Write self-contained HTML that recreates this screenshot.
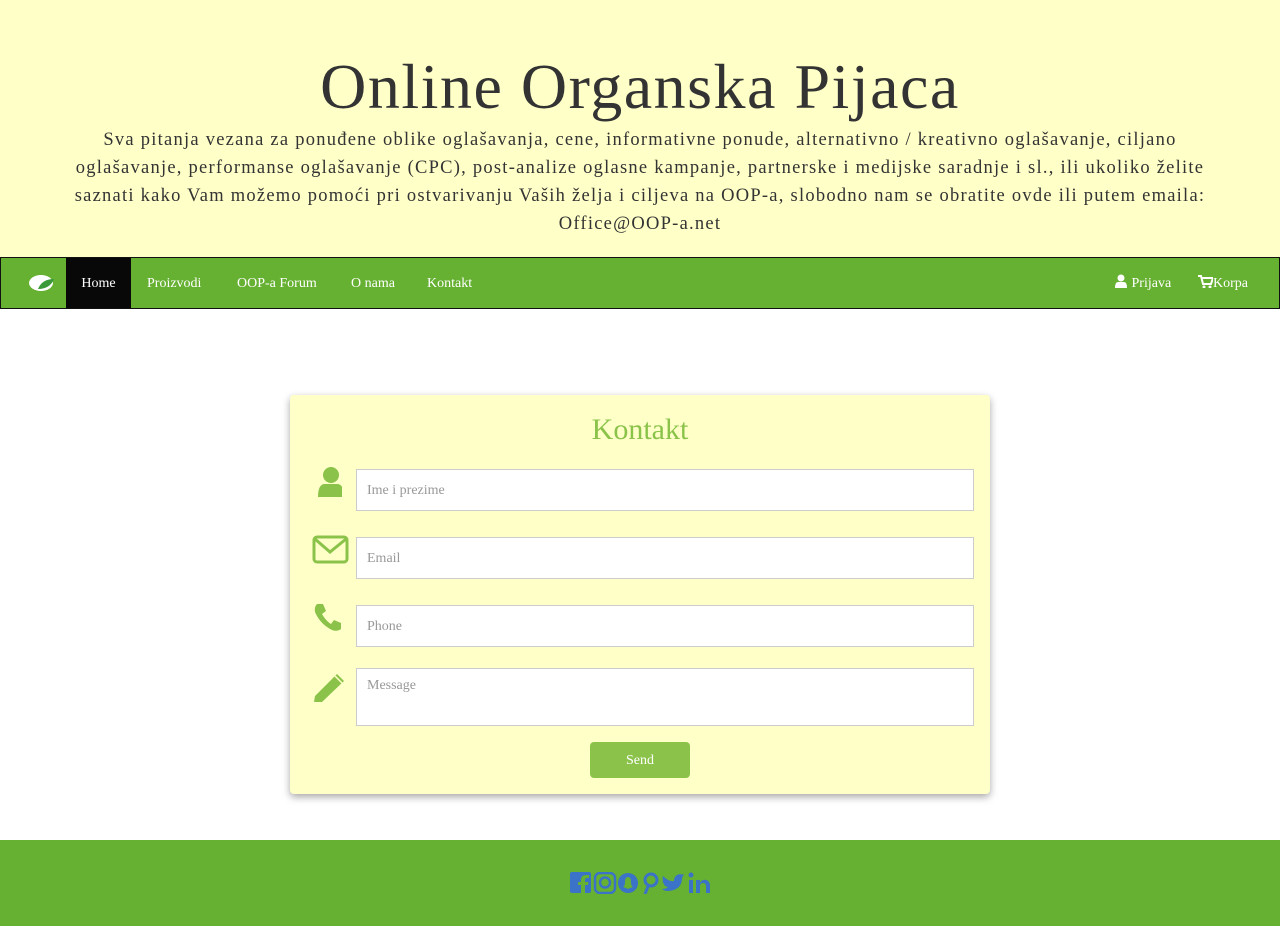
<!DOCTYPE html>
<html><head><meta charset="utf-8"><style>
body{margin:0;font-family:"Liberation Serif",serif;background:#fff;width:1280px;height:926px;overflow:hidden;position:relative}
.hdr{background:#ffffc8;height:257px;text-align:center;color:#333}
.hdr h1{margin:0;padding-top:52px;font-weight:normal;font-size:64px;letter-spacing:1.5px;line-height:70px}
.hdr p{margin:4px 0 0;font-size:18.5px;line-height:28px;white-space:nowrap;letter-spacing:1.25px}
.nav{position:absolute;top:257px;left:0;width:1278px;height:50px;background:#66b032;border:1px solid #111;color:#fff;font-size:14px}
.nav a{position:absolute;top:0;height:50px;line-height:52px;color:#fff}
.card{position:absolute;left:290px;top:395px;width:700px;height:399px;background:#ffffc8;border-radius:4px;box-shadow:0 3px 8px rgba(0,0,0,.35)}
.card h2{margin:0;text-align:center;color:#8bc34a;font-weight:normal;font-size:30px;padding-top:18px}
.in{position:absolute;left:66px;width:618px;height:42px;border:1px solid #ccc;background:#fff;box-sizing:border-box;color:#999;font-size:14px;padding:13px 10px}
.ic{position:absolute;left:22px}
.btn{position:absolute;left:300px;top:347px;width:100px;height:36px;background:#8bc34a;border-radius:4px;color:#fff;text-align:center;line-height:38px;font-size:14px}
.ft{position:absolute;top:840px;left:0;width:1280px;height:86px;background:#66b032}
</style></head><body>
<div class="hdr"><h1>Online Organska Pijaca</h1>
<p>Sva pitanja vezana za ponuđene oblike oglašavanja, cene, informativne ponude, alternativno / kreativno oglašavanje, ciljano<br>oglašavanje, performanse oglašavanje (CPC), post-analize oglasne kampanje, partnerske i medijske saradnje i sl., ili ukoliko želite<br>saznati kako Vam možemo pomoći pri ostvarivanju Vaših želja i ciljeva na OOP-a, slobodno nam se obratite ovde ili putem emaila:<br>Office@OOP-a.net</p></div>
<div class="nav">
<svg style="position:absolute;left:27px;top:15px" width="28" height="20"><ellipse cx="13" cy="10" rx="12" ry="8" fill="#fff"/><path d="M10 16 Q14 6 26 6 Q22 16 10 16Z" fill="#3a9a3a"/></svg>
<a style="left:65px;width:65px;background:#080808;text-align:center">Home</a>
<a style="left:146px">Proizvodi</a><a style="left:236px">OOP-a Forum</a><a style="left:350px">O nama</a><a style="left:426px">Kontakt</a>
<a style="left:1113px"><svg width="14" height="14" style="vertical-align:-1px"><circle cx="7" cy="4" r="3.5" fill="#fff"/><path d="M1 14 Q1 8 4 8 L10 8 Q13 8 13 14Z" fill="#fff"/></svg> Prijava</a>
<a style="left:1197px"><svg width="15" height="13" style="vertical-align:-1px"><path d="M0 1h3l2 8h8l2-6H4" fill="none" stroke="#fff" stroke-width="2"/><circle cx="6" cy="12" r="1.5" fill="#fff"/><circle cx="12" cy="12" r="1.5" fill="#fff"/></svg>Korpa</a>
</div>
<div class="card"><h2>Kontakt</h2>
<svg class="ic" style="top:70px" width="30" height="34"><circle cx="19" cy="10" r="8" fill="#8bc34a"/><path d="M6 32 Q6 20 12 19 L26 19 Q32 20 32 32Z" fill="#8bc34a"/></svg>
<div class="in" style="top:74px">Ime i prezime</div>
<svg class="ic" style="top:140px" width="38" height="30"><rect x="2" y="2" width="33" height="25" rx="3" fill="none" stroke="#8bc34a" stroke-width="3"/><path d="M3 4 L18 17 L34 4" fill="none" stroke="#8bc34a" stroke-width="3"/></svg>
<div class="in" style="top:142px">Email</div>
<svg class="ic" style="top:206px" width="32" height="32"><path d="M5 3 L11 3 L14 10 L10 13 Q14 20 19 23 L22 19 L29 22 L29 28 Q25 31 20 29 Q8 23 3 11 Q2 6 5 3Z" fill="#8bc34a"/></svg>
<div class="in" style="top:210px">Phone</div>
<svg class="ic" style="top:274px" width="36" height="34"><path d="M3 27 L25 5 L32 12 L10 33 L2 33Z" fill="#8bc34a"/><path d="M23 7 L30 14" stroke="#ffffc8" stroke-width="1.5"/></svg>
<div class="in" style="top:273px;height:58px;padding-top:9px">Message</div>
<div class="btn">Send</div></div>
<div class="ft"><svg style="position:absolute;left:570px;top:32px" width="142" height="22" fill="#3b73c8">
<rect x="0" y="0" width="21" height="21" rx="2"/><path d="M15 21v-8h3l.5-3H15V8q0-2 2-2h2V3h-3q-5 0-5 5v2H8v3h3v8Z" fill="#66b032"/>
<circle cx="35" cy="10.5" r="5" fill="none" stroke="#3b73c8" stroke-width="2.5"/><rect x="25" y="1" width="20" height="20" rx="5" fill="none" stroke="#3b73c8" stroke-width="2.5"/>
<circle cx="58" cy="11" r="10"/><path d="M53 15 Q55 14 55 10 Q55 5 58 5 Q61 5 61 10 Q61 14 63 15 Q60 16 58 17 Q56 16 53 15Z" fill="#66b032"/>
<circle cx="81" cy="8" r="6" fill="none" stroke="#3b73c8" stroke-width="3"/><path d="M79 12 L75 22" stroke="#3b73c8" stroke-width="3"/>
<path d="M93 4 Q99 10 104 9 Q104 3 110 2 Q112 3 114 2 L112 6 Q112 18 98 19 Q94 19 92 17 Q96 17 98 15 Q94 14 94 12 Q92 10 93 8 Q92 6 93 4Z"/>
<rect x="119" y="8" width="4" height="13"/><circle cx="121" cy="3" r="2.5"/><path d="M126 8h4v3q2-4 6-3q4 1 4 6v7h-4v-7q0-3-3-3q-3 0-3 3v7h-4Z"/></svg></div>
</body></html>
